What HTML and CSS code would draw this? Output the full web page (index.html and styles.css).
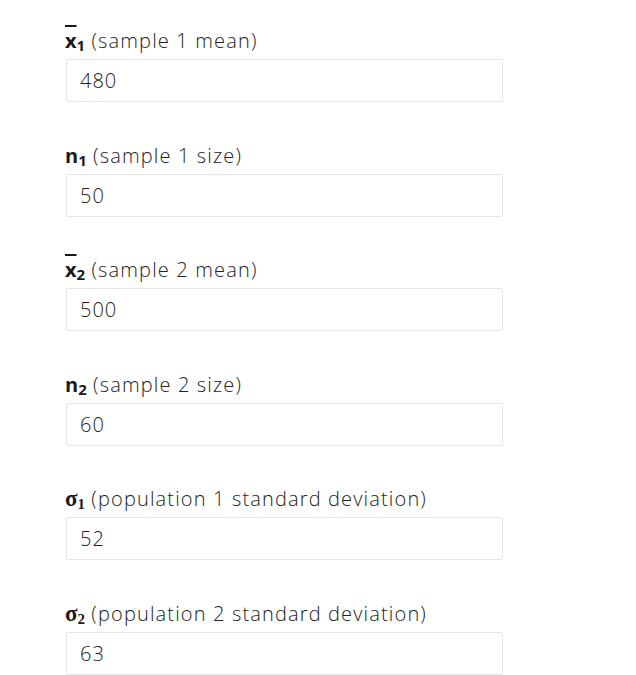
FILE: index.html
```html
<!DOCTYPE html>
<html lang="en">
<head>
    <meta charset="UTF-8">
    <meta name="viewport" content="width=device-width, initial-scale=1.0">
    <title>Two-sample z-test</title>
    <link rel="stylesheet" href="styles.css">
</head>
<body>

    <div class="form">
        <div class="field">
            <label for="mean1"><span class="sym"><span class="bar">x</span><sub>1</sub></span> (sample 1 mean)</label>
            <input type="text" id="mean1" value="480">
        </div>
        <div class="field">
            <label for="size1"><span class="sym">n<sub>1</sub></span> (sample 1 size)</label>
            <input type="text" id="size1" value="50">
        </div>
        <div class="field">
            <label for="mean2"><span class="sym"><span class="bar">x</span><sub>2</sub></span> (sample 2 mean)</label>
            <input type="text" id="mean2" value="500">
        </div>
        <div class="field">
            <label for="size2"><span class="sym">n<sub>2</sub></span> (sample 2 size)</label>
            <input type="text" id="size2" value="60">
        </div>
        <div class="field">
            <label for="sd1"><span class="sym greek">σ<sub>1</sub></span> (population 1 standard deviation)</label>
            <input type="text" id="sd1" value="52">
        </div>
        <div class="field">
            <label for="sd2"><span class="sym greek">σ<sub>2</sub></span> (population 2 standard deviation)</label>
            <input type="text" id="sd2" value="63">
        </div>
    </div>

</body>
</html>
```

FILE: styles.css
```css
body {
    font-family: "Open Sans", Arial, sans-serif;
    background: #ffffff;
    color: #222222;
    margin: 0;
    padding: 26px 0 0 65px;
}
.form {
    width: 437px;
}
.field {
    margin-bottom: 38.5px;
}
.field:last-child {
    margin-bottom: 0;
}
.field label {
    display: block;
    height: 30px;
    font-size: 20px;
    font-weight: 300;
    letter-spacing: 1.15px;
    line-height: 30px;
    margin-bottom: 3px;
    white-space: nowrap;
}
.sym {
    font-family: "Open Sans", Arial, sans-serif;
    font-weight: bold;
    letter-spacing: 0;
    color: #1a1a1a;
}
.sym sub {
    font-size: 15px;
    vertical-align: -3px;
    line-height: 0;
}
.greek {
    font-family: "Liberation Serif", serif;
    font-size: 23px;
}
.bar {
    text-decoration: overline;
    text-decoration-thickness: 2px;
}
.field input {
    display: block;
    box-sizing: border-box;
    width: 437px;
    height: 43px;
    margin-left: 1px;
    padding: 0 13px;
    border: 1px solid #e6e6e6;
    border-radius: 2px;
    font-family: "Open Sans", Arial, sans-serif;
    font-size: 20px;
    font-weight: 300;
    letter-spacing: 1px;
    color: #222222;
    background: #ffffff;
    outline: none;
}
```
